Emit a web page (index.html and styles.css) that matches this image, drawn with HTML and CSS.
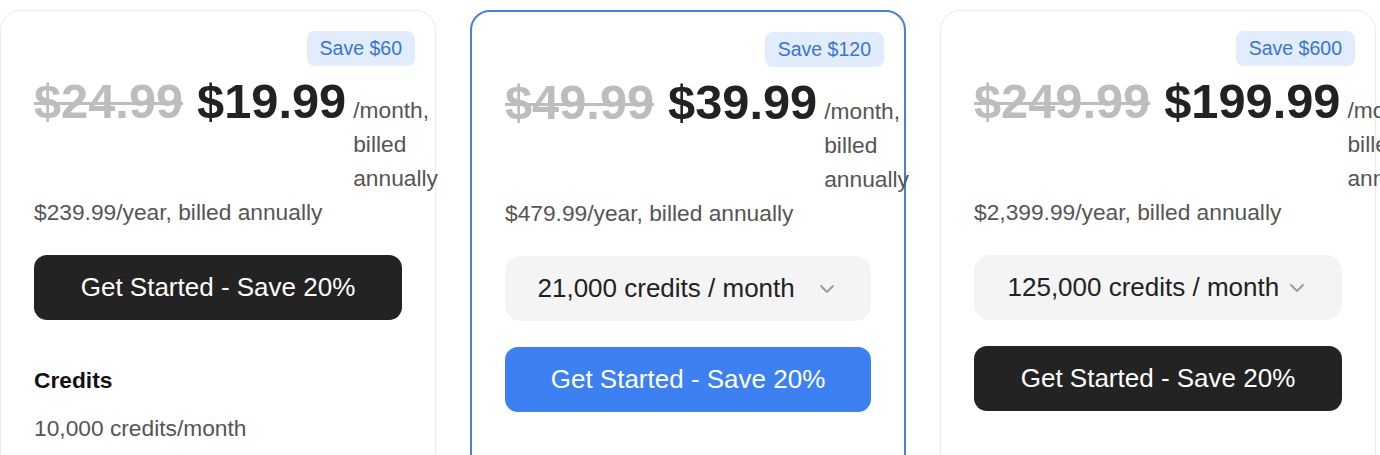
FILE: index.html
```html
<!DOCTYPE html>
<html lang="en">
<head>
<meta charset="utf-8">
<title>Pricing</title>
<link rel="stylesheet" href="styles.css">
</head>
<body>
<div class="cards">
  <div class="card">
    <span class="badge">Save $60</span>
    <div class="price-row">
      <span class="old-price">$24.99</span>
      <span class="new-price">$19.99</span>
      <span class="per">/month, billed annually</span>
    </div>
    <div class="yearly">$239.99/year, billed annually</div>
    <button class="cta dark">Get Started - Save 20%</button>
    <div class="features">
      <div class="feat-title">Credits</div>
      <div class="feat-item">10,000 credits/month</div>
    </div>
  </div>

  <div class="card featured">
    <span class="badge">Save $120</span>
    <div class="price-row">
      <span class="old-price">$49.99</span>
      <span class="new-price">$39.99</span>
      <span class="per">/month, billed annually</span>
    </div>
    <div class="yearly">$479.99/year, billed annually</div>
    <div class="select">
      <div class="select-inner">
        <span>21,000 credits / month</span>
        <svg class="chev" width="16" height="10" viewBox="0 0 16 10"><path d="M2 2l6 6 6-6" fill="none" stroke="#9a9a9a" stroke-width="1.8" stroke-linecap="round" stroke-linejoin="round"/></svg>
      </div>
    </div>
    <button class="cta blue">Get Started - Save 20%</button>
  </div>

  <div class="card">
    <span class="badge">Save $600</span>
    <div class="price-row">
      <span class="old-price">$249.99</span>
      <span class="new-price">$199.99</span>
      <span class="per">/month, billed annually</span>
    </div>
    <div class="yearly">$2,399.99/year, billed annually</div>
    <div class="select">
      <div class="select-inner">
        <span>125,000 credits / month</span>
        <svg class="chev" width="16" height="10" viewBox="0 0 16 10"><path d="M2 2l6 6 6-6" fill="none" stroke="#9a9a9a" stroke-width="1.8" stroke-linecap="round" stroke-linejoin="round"/></svg>
      </div>
    </div>
    <button class="cta dark">Get Started - Save 20%</button>
  </div>
</div>
</body>
</html>
```
FILE: styles.css
```css
html, body {
  margin: 0;
  padding: 0;
  overflow: hidden;
  background: #ffffff;
}
body {
  font-family: "Liberation Sans", Arial, Helvetica, sans-serif;
  color: #222;
  width: 1380px;
  height: 455px;
}
.cards {
  display: flex;
  align-items: flex-start;
  gap: 34px;
  padding-top: 10px;
}
.card {
  position: relative;
  box-sizing: border-box;
  width: 436px;
  flex: 0 0 436px;
  min-height: 620px;
  border: 1px solid #ebebeb;
  border-radius: 20px;
  padding: 33px;
  background: #fff;
}
.card.featured {
  border: 2px solid #4a7fd8;
}
.badge {
  position: absolute;
  top: 20px;
  right: 20px;
  height: 35px;
  line-height: 35px;
  padding: 0 13px;
  font-size: 19.5px;
  border-radius: 8px;
  background: #e1ecfc;
  color: #3a75cc;
}
.price-row {
  display: flex;
  align-items: baseline;
  margin-top: 27.5px;
}
.old-price,
.new-price {
  font-size: 48.75px;
  line-height: 58.5px;
  font-weight: 700;
  white-space: nowrap;
}
.old-price {
  color: #bdbdbd;
  text-decoration: line-through;
  text-decoration-thickness: 3px;
  margin-right: 14px;
}
.new-price {
  color: #222;
  margin-right: 7px;
}
.per {
  font-size: 22.75px;
  line-height: 34px;
  color: #555;
  width: min-content;
}
.yearly {
  font-size: 22.75px;
  line-height: 34px;
  color: #555;
}
.cta {
  display: block;
  width: 100%;
  height: 65px;
  margin-top: 26px;
  border: 0;
  border-radius: 13px;
  font-family: inherit;
  font-size: 26px;
  color: #fff;
  padding: 0;
}
.cta.dark {
  background: #232323;
}
.cta.blue {
  background: #3c80f1;
}
.select {
  margin-top: 26px;
  height: 65px;
  border-radius: 16px;
  background: #f4f4f4;
  display: flex;
  align-items: center;
  justify-content: center;
  font-size: 26px;
  color: #222;
}
.select-inner {
  width: 297px;
  display: flex;
  align-items: center;
  justify-content: space-between;
  margin-right: 4px;
}
.chev {
  display: block;
  margin-top: 1px;
}
.features {
  margin-top: 43px;
}
.feat-title {
  font-size: 22.75px;
  line-height: 34px;
  font-weight: 700;
  color: #111;
}
.feat-item {
  margin-top: 14px;
  font-size: 22.75px;
  line-height: 34px;
  color: #555;
}
```
